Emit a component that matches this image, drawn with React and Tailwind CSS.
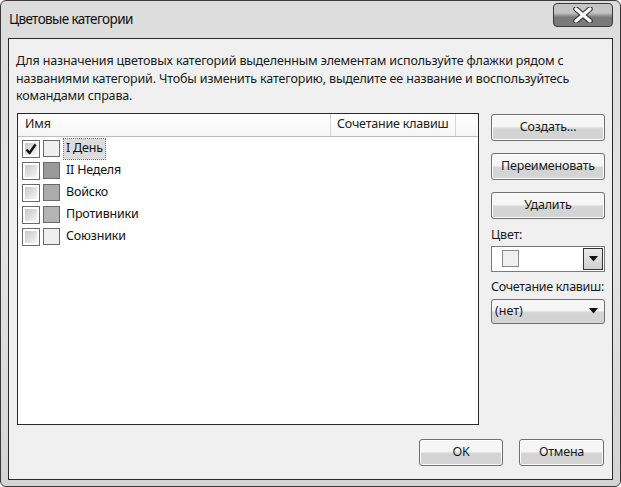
const font = { fontFamily: '"Noto Sans", "Open Sans", Arial, sans-serif' }

const CATEGORIES = [
  { name: 'I День', color: 'bg-[#efefef]', checked: true, selected: true },
  { name: 'II Неделя', color: 'bg-[#9a9a9a]' },
  { name: 'Войско', color: 'bg-[#ababab]' },
  { name: 'Противники', color: 'bg-[#b4b4b4]' },
  { name: 'Союзники', color: 'bg-[#efefef]' },
]

const btnClass = 'flex items-center justify-center h-[27px] rounded-[3px] border border-[#707070] bg-linear-to-b from-[#f6f6f6] from-45% to-[#d4d4d4] to-55% text-[12.5px] tracking-[-0.2px] text-[#1a1a1a] shadow-[inset_0_0_0_1px_#fcfcfc]'

function Checkbox({ checked }) {
  return (
    <div className="w-[18px] h-[18px] border border-[#6a6a6a] bg-white p-[2px]">
      <div className="w-full h-full bg-linear-to-br from-[#c8c8c8] to-[#f4f4f4] flex items-center justify-center">
        {checked && (
          <svg width="12" height="12" viewBox="0 0 12 12">
            <path d="M1.5 6.5 L4.5 10 L10.5 1.5" fill="none" stroke="#111" strokeWidth="2.4" strokeLinejoin="round" />
          </svg>
        )}
      </div>
    </div>
  )
}

function Row({ cat }) {
  return (
    <div className="flex items-center h-[22px] pl-[4px]">
      <Checkbox checked={cat.checked} />
      <div className={`ml-[3px] w-[17px] h-[17px] border border-[#6a6a6a] ${cat.color}`} />
      <div className={`ml-[4px] px-[2px] h-[20px] flex items-center text-[12.5px] tracking-[-0.2px] text-[#111] ${cat.selected ? 'bg-[#dcdcdc] outline-1 outline-dotted outline-[#666]' : ''}`}>
        {cat.name}
      </div>
    </div>
  )
}

export default function App() {
  return (
    <div style={font} className="w-[621px] h-[487px] bg-white">
      <div className="w-full h-full rounded-[6px] border border-[#3a3a3a] bg-linear-to-b from-[#dcdcdc] via-[#e4e4e4] to-[#d4d4d4] flex flex-col px-[7px] pb-[6px]">
        {/* Title bar */}
        <div className="h-[37px] flex items-start justify-between shrink-0">
          <div className="pt-[8px] pl-[1px] text-[13.5px] tracking-[-0.6px] text-[#111]">Цветовые категории</div>
          <div className="mt-[2px] mr-[0px] w-[60px] h-[24px] rounded-[4px] border border-[#3a3a3a] bg-linear-to-b from-[#c4c4c4] from-40% to-[#7a7a7a] to-60% flex items-center justify-center">
            <svg width="22" height="16" viewBox="0 0 22 16">
              <path d="M4 2 L18 14 M18 2 L4 14" stroke="#333" strokeWidth="5.5" strokeLinecap="round" />
              <path d="M4 2 L18 14 M18 2 L4 14" stroke="#fff" strokeWidth="3.2" strokeLinecap="round" />
            </svg>
          </div>
        </div>

        {/* Client area */}
        <div className="flex-1 border border-[#2a2a2a] bg-[#f0f0f0] flex flex-col px-[7px] pt-[13px] pb-[13px]">
          <p className="text-[12.5px] tracking-[-0.15px] leading-[17.5px] text-[#1a1a1a] whitespace-nowrap">
            Для назначения цветовых категорий выделенным элементам используйте флажки рядом с<br />
            названиями категорий. Чтобы изменить категорию, выделите ее название и воспользуйтесь<br />
            командами справа.
          </p>

          <div className="flex mt-[8px] gap-[12px]">
            {/* List */}
            <div className="w-[462px] h-[312px] ml-[1px] border border-[#2a2a2a] bg-white flex flex-col">
              <div className="h-[23px] flex border-b border-[#bdbdbd] bg-linear-to-b from-white to-[#f6f6f6] text-[12.5px] tracking-[-0.2px] text-[#222] whitespace-nowrap">
                <div className="w-[313px] pl-[7px] flex items-center border-r border-[#d8d8d8]">Имя</div>
                <div className="w-[125px] pl-[6px] flex items-center border-r border-[#d8d8d8]">Сочетание клавиш</div>
                <div className="flex-1" />
              </div>
              <div className="pt-[1px]">
                {CATEGORIES.map((c) => (
                  <Row key={c.name} cat={c} />
                ))}
              </div>
            </div>

            {/* Right controls */}
            <div className="w-[114px] flex flex-col">
              <div className={`${btnClass} mt-[1px]`}>Создать...</div>
              <div className={`${btnClass} mt-[12px]`}>Переименовать</div>
              <div className={`${btnClass} mt-[12px]`}>Удалить</div>
              <div className="mt-[8px] text-[12.5px] tracking-[-0.2px] text-[#1a1a1a] leading-[16px]">Цвет:</div>
              <div className="mt-[3px] h-[26px] border border-[#7a7a7a] bg-white flex items-center">
                <div className="ml-[10px] w-[17px] h-[17px] border border-[#8a8a8a] bg-[#f0f0f0]" />
                <div className="ml-auto mr-[1px] w-[20px] h-[22px] border border-[#333] bg-linear-to-b from-[#ececec] to-[#cfcfcf] flex items-center justify-center">
                  <svg width="9" height="6" viewBox="0 0 9 6"><path d="M0 0 H9 L4.5 5.5 Z" fill="#111" /></svg>
                </div>
              </div>
              <div className="mt-[7px] text-[12.5px] tracking-[-0.3px] text-[#1a1a1a] leading-[16px] whitespace-nowrap">Сочетание клавиш:</div>
              <div className="mt-[4px] h-[25px] rounded-[3px] border border-[#707070] bg-linear-to-b from-[#f6f6f6] from-45% to-[#d4d4d4] to-55% flex items-center pl-[3px] pr-[6px] text-[12.5px] text-[#1a1a1a]">
                <span>(нет)</span>
                <svg className="ml-auto" width="9" height="6" viewBox="0 0 9 6"><path d="M0 0 H9 L4.5 5.5 Z" fill="#111" /></svg>
              </div>
            </div>
          </div>

          <div className="mt-auto flex justify-end gap-[16px] pr-[1px]">
            <div className={`${btnClass} w-[84px]`}>OK</div>
            <div className={`${btnClass} w-[85px]`}>Отмена</div>
          </div>
        </div>
      </div>
    </div>
  )
}
